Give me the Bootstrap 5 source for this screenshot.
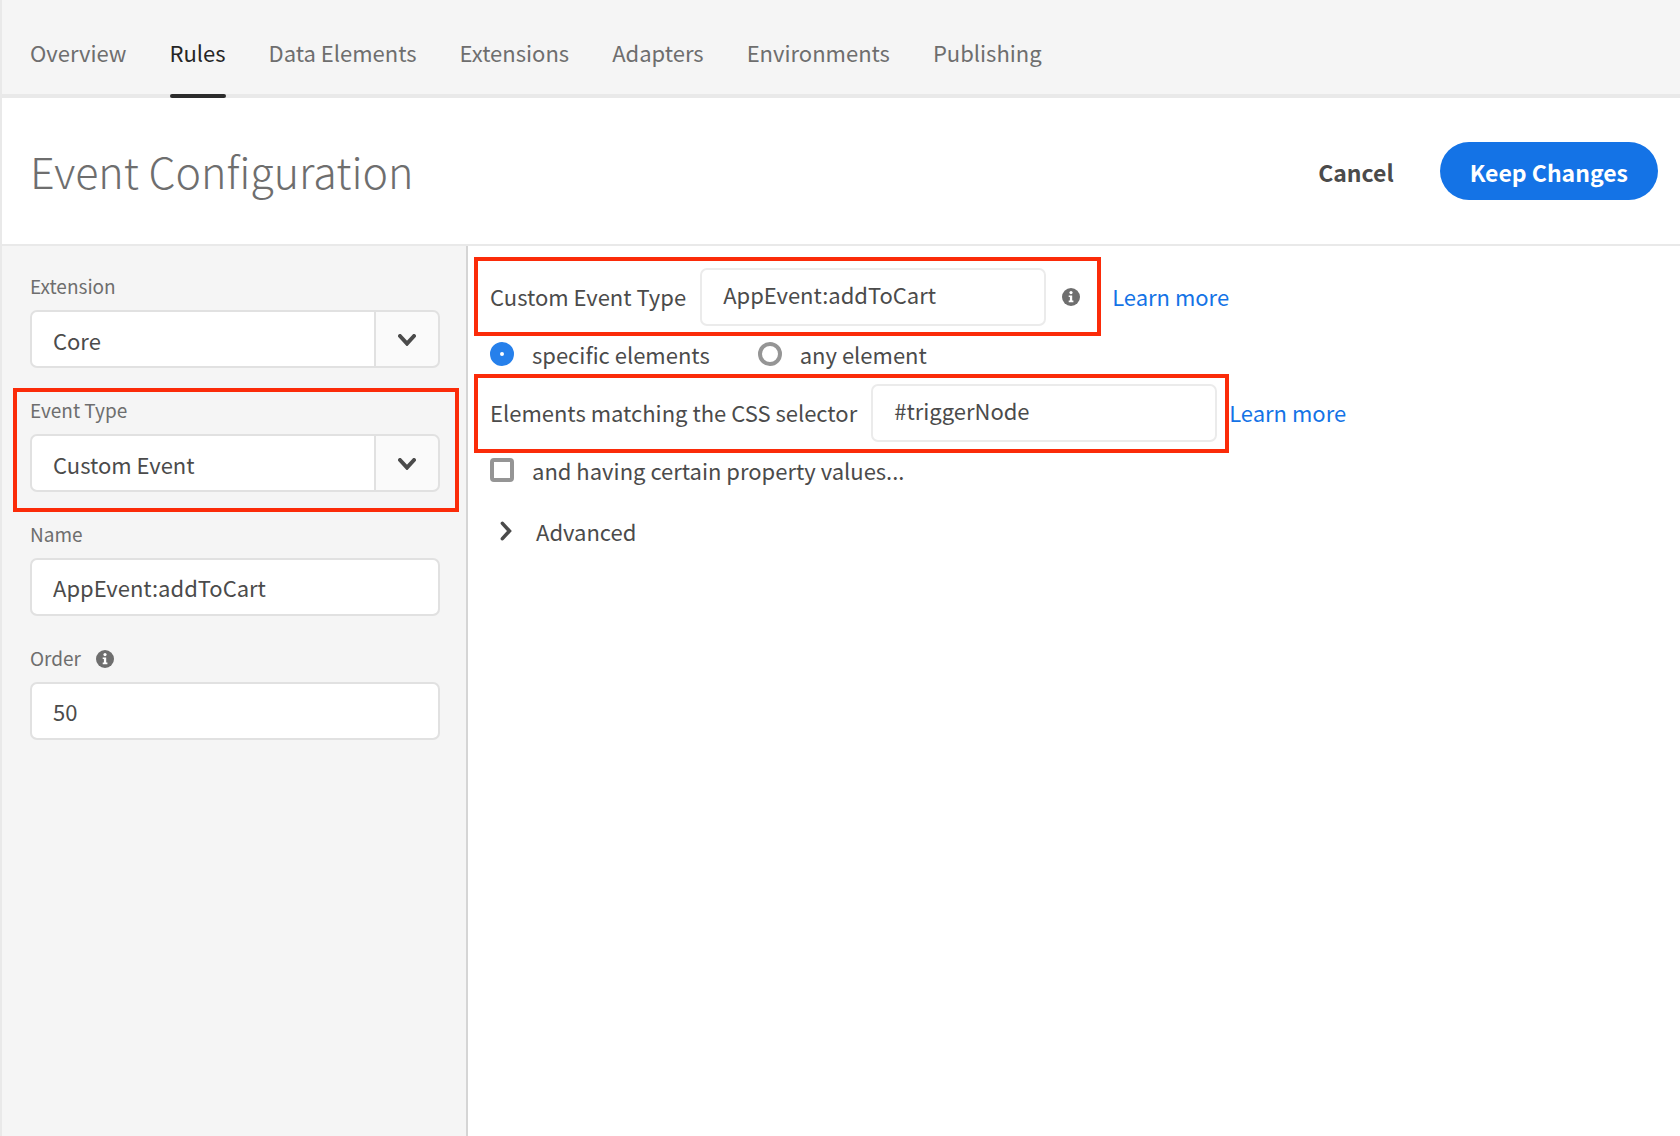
<!DOCTYPE html>
<html lang="en">
<head>
<meta charset="utf-8">
<meta name="viewport" content="width=device-width, initial-scale=1">
<title>Event Configuration</title>
<link href="https://cdn.jsdelivr.net/npm/bootstrap@5.3.0/dist/css/bootstrap.min.css" rel="stylesheet">
<style>
  :root {
    --ink: #4b4b4b;
    --muted: #6e6e6e;
    --panel: #f5f5f5;
    --line: #e9e9e9;
    --field-line: #e1e1e1;
    --accent: #1473e6;
    --callout: #fb2b09;
  }
  body {
    font-family: "Noto Sans CJK JP", "Noto Sans", sans-serif;
    font-size: 22px;
    line-height: 24px;
    color: var(--ink);
    border-left: 2px solid var(--line);
  }

  /* Top tabs */
  .tabs-bar { background: var(--panel); border-bottom: 4px solid var(--line); padding: 0 28px; }
  .tabs-bar .nav { gap: 0 43px; }
  .tabs-bar .nav-link {
    padding: 40px 0 34px;
    margin-bottom: -4px;
    color: var(--muted);
    position: relative;
  }
  .tabs-bar .nav-link.active { color: #252525; }
  .tabs-bar .nav-link.active::after {
    content: "";
    position: absolute;
    inset: auto 0 0 0;
    height: 4px;
    border-radius: 2px;
    background: #2c2c2c;
  }

  /* Title row */
  .title-bar { border-bottom: 2px solid var(--line); padding: 44px 22px 44px 28px; }
  .title-bar h1 { font-size: 43px; line-height: 56px; padding-bottom: 2px; font-weight: 300; color: var(--muted); }
  .title-bar .btn { font-size: 23px; line-height: 24px; font-weight: 700; padding: 18px 30px 16px; border: 0; }
  .btn-cancel { color: var(--ink); }
  .btn-keep, .btn-keep:hover { background: var(--accent); color: #fff; }

  /* Left panel */
  .side-panel { flex: 0 0 466px; background: var(--panel); border-right: 2px solid #d5d5d5; padding: 28px 26px 28px 28px; }
  .side-panel form { gap: 30px; }
  .side-panel .form-label { font-size: 19px; color: var(--muted); margin-bottom: 12px; }
  .label-line { gap: 15px; }

  .form-control, .form-select {
    height: 58px;
    padding: 0 21px;
    border: 2px solid var(--field-line);
    border-radius: 7px;
    font-size: 22px;
    line-height: 24px;
    color: var(--ink);
    background-color: #fff;
  }
  .form-select {
    padding-top: 2px;
    background-image: linear-gradient(var(--field-line), var(--field-line)), linear-gradient(#fafafa, #fafafa);
    background-size: 2px 100%, 62px 100%;
    background-position: right 62px top 0, right top;
    background-repeat: no-repeat;
  }
  .select-arrow { position: absolute; right: 24px; top: 24px; pointer-events: none; }

  /* Right panel */
  .main-panel { padding: 22px; }
  .field-row { min-height: 58px; }
  .toggle-row { padding-bottom: 2px; }
  .main-panel .form-control { width: 346px; margin-left: 14px; padding-bottom: 7px; border-color: #ebebeb; }
  .main-panel a { color: var(--accent); text-decoration: none; }
  .row-text { padding-bottom: 2px; }
  .main-panel .form-check-input {
    width: 24px;
    height: 24px;
    margin: 0 18px 0 0;
    float: none;
    flex: none;
    border: 4px solid #959595;
    background-color: #fff;
  }
  .main-panel .form-check-input[type=checkbox] { border-radius: 4px; }
  .main-panel .form-check-input[type=radio]:checked {
    border: 10px solid #2680eb;
    background: #fff;
  }
  .advanced-toggle { padding: 19px 10px; gap: 24px; font-size: 22px; line-height: 24px; color: var(--ink); }

  /* Red outlines round the fields of interest */
  .callout-box { position: relative; }
  .callout-box::after { content: ""; position: absolute; border: 4px solid var(--callout); pointer-events: none; }
  .callout-side::after { inset: -10px -19px -20px -17px; }
  .callout-event::after { inset: -11px -21px -10px -16px; }
  .callout-selector::after { inset: -10px -12px -11px -16px; }
</style>
</head>
<body class="d-flex flex-column min-vh-100">

<svg class="d-none" aria-hidden="true">
  <symbol id="info" viewBox="0 0 18 18">
    <circle cx="9" cy="9" r="9" fill="#6e6e6e"/>
    <circle cx="9" cy="4.6" r="1.6" fill="#fff"/>
    <path d="M6.7 7.4h3.5v5.2h1.2v1.6H6.7v-1.6h1.2V9H6.7z" fill="#fff"/>
  </symbol>
  <symbol id="chevron" viewBox="0 0 18 12">
    <path d="M2 2l7 7.6L16 2" fill="none" stroke="#4b4b4b" stroke-width="4" stroke-linecap="round"/>
  </symbol>
  <symbol id="chevron-right" viewBox="0 0 12 20">
    <path d="M2.4 2.4l7 7.6-7 7.6" fill="none" stroke="#4b4b4b" stroke-width="3.6" stroke-linecap="round"/>
  </symbol>
</svg>

<nav class="tabs-bar" aria-label="Property sections">
  <ul class="nav">
    <li class="nav-item"><a class="nav-link" href="#">Overview</a></li>
    <li class="nav-item"><a class="nav-link active" aria-current="page" href="#">Rules</a></li>
    <li class="nav-item"><a class="nav-link" href="#">Data Elements</a></li>
    <li class="nav-item"><a class="nav-link" href="#">Extensions</a></li>
    <li class="nav-item"><a class="nav-link" href="#">Adapters</a></li>
    <li class="nav-item"><a class="nav-link" href="#">Environments</a></li>
    <li class="nav-item"><a class="nav-link" href="#">Publishing</a></li>
  </ul>
</nav>

<header class="title-bar d-flex align-items-center justify-content-between">
  <h1 class="mb-0">Event Configuration</h1>
  <div class="d-flex align-items-center gap-3">
    <button type="button" class="btn btn-cancel">Cancel</button>
    <button type="button" class="btn btn-keep rounded-pill">Keep Changes</button>
  </div>
</header>

<div class="d-flex flex-grow-1">
  <aside class="side-panel">
    <form class="d-flex flex-column">
      <div>
        <label class="form-label d-block" for="extension">Extension</label>
        <div class="position-relative">
          <select class="form-select" id="extension"><option>Core</option></select>
          <svg class="select-arrow" width="18" height="12" aria-hidden="true"><use href="#chevron"/></svg>
        </div>
      </div>
      <div class="callout-box callout-side">
        <label class="form-label d-block" for="eventType">Event Type</label>
        <div class="position-relative">
          <select class="form-select" id="eventType"><option>Custom Event</option></select>
          <svg class="select-arrow" width="18" height="12" aria-hidden="true"><use href="#chevron"/></svg>
        </div>
      </div>
      <div>
        <label class="form-label d-block" for="eventName">Name</label>
        <input class="form-control" id="eventName" type="text" value="AppEvent:addToCart">
      </div>
      <div>
        <div class="label-line d-flex">
          <label class="form-label" for="order">Order</label>
          <svg class="mt-1" width="18" height="18" role="img" aria-label="Information"><use href="#info"/></svg>
        </div>
        <input class="form-control" id="order" type="text" inputmode="numeric" value="50">
      </div>
    </form>
  </aside>

  <main class="main-panel flex-grow-1">
    <div class="field-row d-flex align-items-center">
      <div class="callout-box callout-event d-flex align-items-center">
        <label class="row-text" for="customType">Custom Event Type</label>
        <input class="form-control" id="customType" type="text" value="AppEvent:addToCart">
        <svg class="ms-3" width="18" height="18" role="img" aria-label="Information"><use href="#info"/></svg>
      </div>
      <a class="row-text ms-3 ps-3" href="#">Learn more</a>
    </div>
    <div class="field-row toggle-row d-flex align-items-center gap-5">
      <div class="d-flex align-items-center">
        <input class="form-check-input" type="radio" name="scope" id="specific" checked>
        <label for="specific">specific elements</label>
      </div>
      <div class="d-flex align-items-center">
        <input class="form-check-input" type="radio" name="scope" id="any">
        <label for="any">any element</label>
      </div>
    </div>
    <div class="field-row d-flex align-items-center">
      <div class="callout-box callout-selector d-flex align-items-center">
        <label class="row-text" for="selector">Elements matching the CSS selector</label>
        <input class="form-control" id="selector" type="text" value="#triggerNode">
      </div>
      <a class="row-text ps-2 ms-1" href="#">Learn more</a>
    </div>
    <div class="field-row toggle-row d-flex align-items-center">
      <input class="form-check-input" type="checkbox" id="props">
      <label for="props">and having certain property values...</label>
    </div>
    <button type="button" class="advanced-toggle btn border-0 d-flex align-items-center" aria-expanded="false">
      <svg width="12" height="20" aria-hidden="true"><use href="#chevron-right"/></svg>
      <span>Advanced</span>
    </button>
  </main>
</div>

<script src="https://cdn.jsdelivr.net/npm/bootstrap@5.3.0/dist/js/bootstrap.bundle.min.js"></script>
</body>
</html>
